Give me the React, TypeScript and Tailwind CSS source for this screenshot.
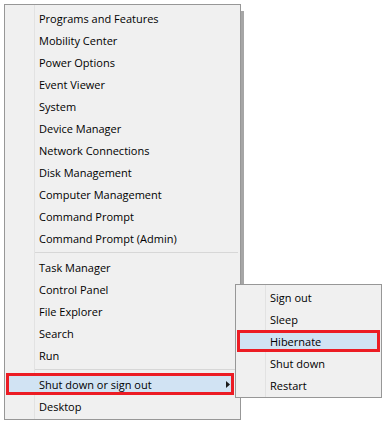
const topItems = [
  "Programs and Features",
  "Mobility Center",
  "Power Options",
  "Event Viewer",
  "System",
  "Device Manager",
  "Network Connections",
  "Disk Management",
  "Computer Management",
  "Command Prompt",
  "Command Prompt (Admin)",
];

const midItems = ["Task Manager", "Control Panel", "File Explorer", "Search", "Run"];

const subItems = ["Sign out", "Sleep", "Hibernate", "Shut down", "Restart"];

function Separator() {
  return (
    <div className="h-[7px] flex items-center pl-[30px] pr-[2px]">
      <div className="h-px flex-1 bg-[#d7d7d7]" />
    </div>
  );
}

function Item({ label }: { label: string }) {
  return <div className="h-[22px] flex items-center pt-[2px] pl-[34px] whitespace-nowrap">{label}</div>;
}

/** Row that is hovered and circled in red in the screenshot. */
function MarkedItem({ label, arrow, className }: { label: string; arrow?: boolean; className: string }) {
  return (
    <div
      className={`h-[22px] flex items-center pt-[2px] pl-[30px] border-[3px] border-[#ec1c24] bg-[#d1e3f3] whitespace-nowrap ${className}`}
    >
      {label}
      {arrow && (
        <svg className="ml-auto mr-[1px] -mt-[2px]" width="4" height="7" viewBox="0 0 4 7">
          <path d="M0 0 L4 3.5 L0 7 Z" fill="#1a1a1a" />
        </svg>
      )}
    </div>
  );
}

export default function App() {
  return (
    <div
      className="relative w-[387px] h-[425px] bg-white pl-[4px] pt-[4px] text-[11px] text-black"
      style={{ fontFamily: '"Open Sans", "Noto Sans", sans-serif' }}
    >
      {/* drop shadow on the right of the main menu */}
      <div className="absolute left-[241px] top-[11px] w-[3px] h-[280px] bg-[#a6a6a6]" />

      <div className="relative w-[237px] border border-[#979797] bg-[#f0f0f0] pt-[2px] pb-[2px]">
        {/* icon gutter */}
        <div className="absolute left-[29px] top-0 bottom-0 w-px bg-[#e2e2e2]" />

        <div className="relative">
          {topItems.map((t) => (
            <Item key={t} label={t} />
          ))}
          <Separator />
          {midItems.map((t) => (
            <Item key={t} label={t} />
          ))}
          <Separator />
          <MarkedItem label="Shut down or sign out" arrow className="ml-[1px] mr-[6px]" />
          <Item label="Desktop" />
        </div>
      </div>

      {/* flyout submenu */}
      <div className="absolute left-[235px] top-[284px] w-[147px] border border-[#979797] bg-[#f0f0f0] pt-px pb-px">
        <div className="absolute left-[29px] top-0 bottom-0 w-px bg-[#e2e2e2]" />
        <div className="relative">
          {subItems.map((t) =>
            t === "Hibernate" ? (
              <MarkedItem key={t} label={t} className="mx-[1px]" />
            ) : (
              <Item key={t} label={t} />
            )
          )}
        </div>
      </div>
    </div>
  );
}
